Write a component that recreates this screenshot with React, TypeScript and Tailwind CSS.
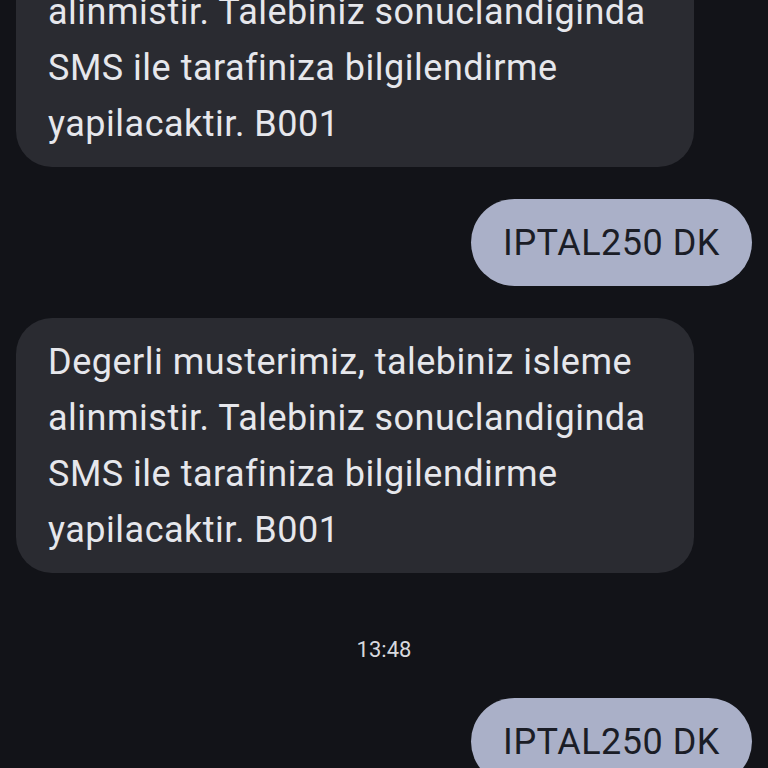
import React from "react";

const font = { fontFamily: "Roboto, 'Open Sans', sans-serif" };

function Received() {
  return (
    <div className="flex justify-start pl-4">
      <div className="w-[678px] rounded-[36px] bg-[#2a2b31] pl-8 pr-4 pt-[16px] pb-[15px] text-[36px] leading-[56px] tracking-[0.5px] whitespace-nowrap text-[#e6e7ec]">
        Degerli musterimiz, talebiniz isleme
        <br />
        alinmistir. Talebiniz sonuclandiginda
        <br />
        SMS ile tarafiniza bilgilendirme
        <br />
        yapilacaktir. B001
      </div>
    </div>
  );
}

function Sent() {
  return (
    <div className="flex justify-end pr-4">
      <div className="flex h-[87px] w-[281px] items-center justify-center rounded-full bg-[#aab0c8] text-[36px] tracking-[0.5px] text-[#1b1d26]">
        IPTAL250 DK
      </div>
    </div>
  );
}

export default function App() {
  return (
    <div className="h-[768px] w-[768px] overflow-hidden bg-[#121318]" style={font}>
      <div className="mt-[-88px] flex flex-col gap-8">
        <Received />
        <Sent />
        <Received />
      </div>
      <div className="mt-[63px] flex justify-center text-[22px] leading-[28px] text-[#d8d9de]">13:48</div>
      <div className="mt-[34px]">
        <Sent />
      </div>
    </div>
  );
}
